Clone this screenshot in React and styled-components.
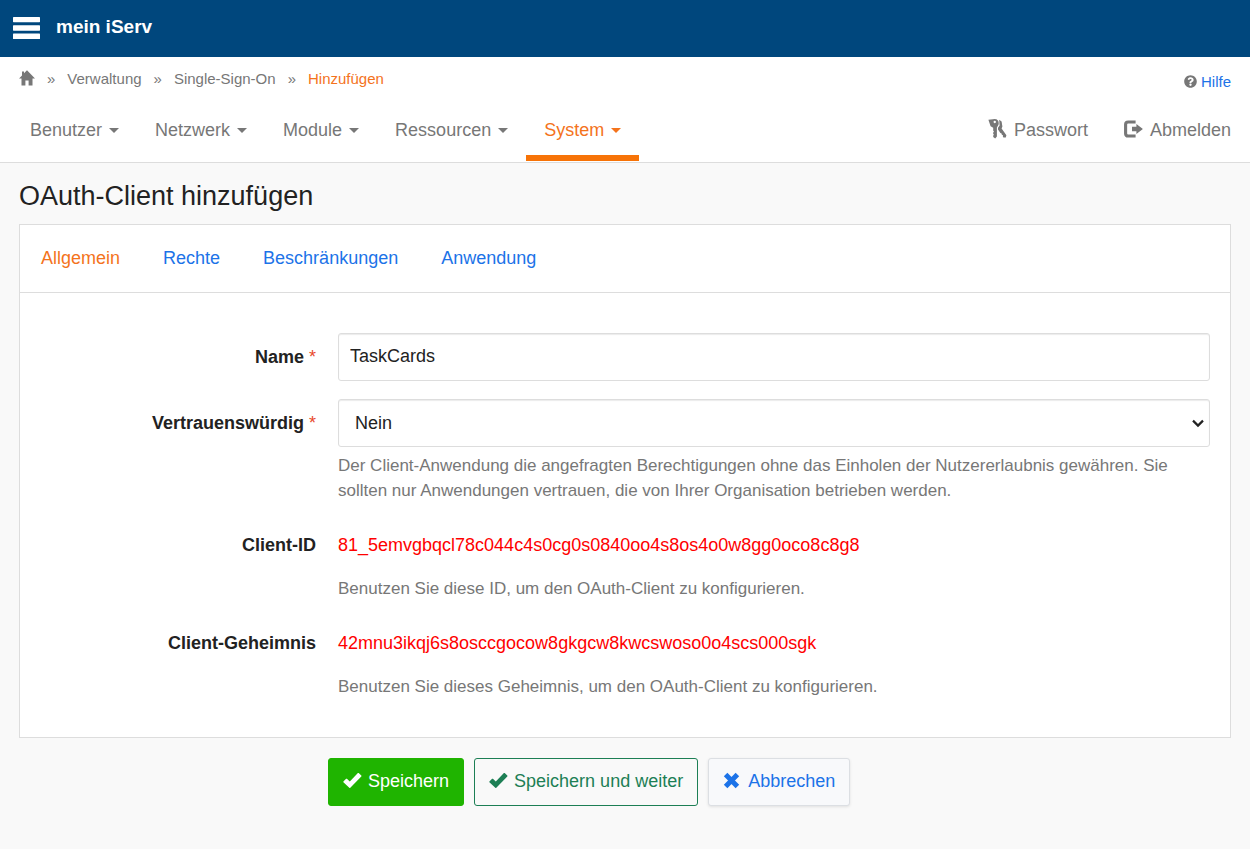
import React from 'react';
import { styled, createGlobalStyle } from 'styled-components';
import { FaQuestionCircle } from 'react-icons/fa';

const help_trusted = `Der Client-Anwendung die angefragten Berechtigungen ohne das Einholen der Nutzererlaubnis gewähren. Sie sollten nur Anwendungen vertrauen, die von Ihrer Organisation betrieben werden.`;
const help_id = `Benutzen Sie diese ID, um den OAuth-Client zu konfigurieren.`;
const help_secret = `Benutzen Sie dieses Geheimnis, um den OAuth-Client zu konfigurieren.`;

const menu = ['Benutzer', 'Netzwerk', 'Module', 'Ressourcen', 'System'];
const tabs = ['Allgemein', 'Rechte', 'Beschränkungen', 'Anwendung'];

const GlobalStyle = createGlobalStyle`
  * {
    box-sizing: border-box;
  }
  body {
    margin: 0;
    background: #f9f9f9;
    color: #222;
    font-family: 'Liberation Sans', Arial, sans-serif;
    font-size: 18px;
    line-height: 25px;
  }
  a {
    color: inherit;
    text-decoration: none;
  }
  input, select, button {
    color: inherit;
    font: inherit;
  }
  svg {
    display: block;
    flex: none;
  }
`;

/* top bar */
const TopBar = styled.header`
  display: flex;
  align-items: center;
  gap: 16px;
  height: 57px;
  padding: 0 13px 2px;
  background: #00477d;
  color: #fff;
`;
const MenuButton = styled.button`
  padding: 0;
  border: 0;
  background: none;
  cursor: pointer;
`;
const Brand = styled.a`
  padding-bottom: 2px;
  font-size: 19px;
  font-weight: bold;
`;

/* breadcrumb and main navigation */
const NavArea = styled.div`
  border-bottom: 1px solid #ddd;
  background: #fff;
  color: #777;
`;
const CrumbRow = styled.div`
  display: flex;
  justify-content: space-between;
  padding: 9px 19px 8px;
  font-size: 15px;
`;
const Crumbs = styled.ol`
  display: flex;
  align-items: center;
  margin: 0;
  padding: 0;
  list-style: none;
`;
const Crumb = styled.li`
  display: flex;
  align-items: center;
  color: ${({ $active }) => ($active ? '#f4731c' : 'inherit')};

  &:not(:first-child)::before {
    content: '»';
    padding: 0 12px;
    color: #777;
  }
`;
const Help = styled.a`
  display: flex;
  align-items: center;
  gap: 4px;
  padding-top: 6px;
  line-height: 19px;

  span {
    color: #1c73e8;
  }
`;
const Nav = styled.nav`
  display: flex;
  justify-content: space-between;
  padding: 0 1px 1px 12px;
`;
const NavGroup = styled.div`
  display: flex;
`;
const NavLink = styled.a`
  display: flex;
  align-items: center;
  gap: 7px;
  height: 62px;
  padding: 6px 18px 0;
  border-bottom: 6px solid ${({ $active }) => ($active ? '#f77307' : 'transparent')};
  color: ${({ $active }) => ($active ? '#f4731c' : '#777')};
`;
const Caret = styled.span`
  border-top: 5px solid currentColor;
  border-left: 5px solid transparent;
  border-right: 5px solid transparent;
`;

/* page content */
const Main = styled.main`
  padding: 16px 19px 43px;
`;
const Title = styled.h1`
  margin: 0 0 10px;
  font-size: 27px;
  font-weight: normal;
  line-height: 35px;
`;
const Panel = styled.section`
  border: 1px solid #ddd;
  background: #fff;
`;
const Tabs = styled.nav`
  display: flex;
  gap: 43px;
  padding: 21px;
  border-bottom: 1px solid #ddd;
`;
const Tab = styled.a`
  color: ${({ $active }) => ($active ? '#f4731c' : '#1c73e8')};
`;
const Fields = styled.div`
  display: grid;
  gap: 18px;
  padding: 40px 20px 38px;
`;
const Row = styled.div`
  display: grid;
  grid-template-columns: repeat(4, minmax(0, 1fr));
  column-gap: 22px;
`;
const Label = styled.label`
  padding-top: 12px;
  font-weight: bold;
  text-align: right;
`;
const Required = styled.span`
  color: #e8492c;
  font-weight: normal;
`;
const Field = styled.div`
  grid-column: span 3;
`;
const Input = styled.input`
  display: block;
  width: 100%;
  height: 48px;
  padding: 0 11px 2px;
  border: 1px solid #ddd;
  border-radius: 3px;
  background: #fff;
  box-shadow: inset 0 1px 1px rgba(0, 0, 0, 0.08);
`;
const SelectBox = styled.div`
  position: relative;

  svg {
    position: absolute;
    top: 20px;
    right: 6px;
    pointer-events: none;
  }
`;
const Select = styled(Input).attrs({ as: 'select' })`
  padding: 0 28px 0 16px;
  appearance: none;
`;
const Value = styled.output`
  display: block;
  padding: 12px 0;
  color: #f00;
`;
const HelpText = styled.p`
  margin: 6px 0 0;
  color: #777;
  font-size: 17px;
`;

const Actions = styled.div`
  display: flex;
  flex-wrap: wrap;
  gap: 10px;
  padding: 20px 12px 0 calc(25% + 6px);
`;
const Button = styled.button`
  display: flex;
  align-items: center;
  gap: ${({ $gap }) => $gap || 6}px;
  height: 48px;
  padding: 0 14px 2px;
  border: 1px solid ${({ $border }) => $border};
  border-radius: 3px;
  background: ${({ $bg }) => $bg};
  color: ${({ $color }) => $color};
  box-shadow: ${({ $raised }) => ($raised ? '0 1px 3px rgba(0, 0, 0, 0.1)' : 'none')};
  cursor: pointer;
`;

const BarsIcon = () => (
  <svg width="27" height="22" viewBox="0 0 27 22" fill="currentColor" aria-hidden="true">
    <rect width="27" height="5.2" rx="0.6" />
    <rect y="8.3" width="27" height="5.4" rx="0.6" />
    <rect y="16.6" width="27" height="5.4" rx="0.6" />
  </svg>
);
const HomeIcon = () => (
  <svg width="16" height="18" viewBox="0 0 16 18" fill="currentColor" aria-hidden="true">
    <path d="M8 0.2 L16 8.4 H13.5 V15.4 H9.6 V10.4 H6.4 V15.4 H2.5 V8.4 H0 L3 5.4 V1.6 H5 V3.3 Z" />
  </svg>
);
const KeysIcon = () => (
  <svg width="19" height="22" viewBox="0 0 19 22" fill="currentColor" aria-hidden="true">
    <path
      fillRule="evenodd"
      d="M0.4 0.8 L5 0.3 Q8 -0.4 10 1.6 Q11.2 3.6 10.4 6 L8.9 8.6 V17.6 L7.2 19.6 L5.2 18 V16.6 L6 15.8 L5.2 15 V13.4 L6 12.6 L5.2 11.8 V8.8 L2.6 7.2 Z M6.7 1.8 A1.2 1.2 0 1 0 6.8 4.2 A1.2 1.2 0 1 0 6.7 1.8 Z"
    />
    <path d="M11.2 0.8 L13.6 2.6 L14.4 7.6 L13.6 9.6 L18.4 16.2 L17.8 18.6 L15.4 18.4 L14.8 17.2 L15 16.2 L13.8 15.8 L13.6 14.4 L12.4 14 L10 10.4 V8.8 L11.6 6.4 Z" />
  </svg>
);
const LogoutIcon = () => (
  <svg width="19" height="20" viewBox="0 0 19 20" aria-hidden="true">
    <path
      d="M11.6 2 H4.2 Q1.6 2 1.6 4.6 V13.4 Q1.6 16 4.2 16 H11.6"
      fill="none"
      stroke="currentColor"
      strokeWidth="3.1"
    />
    <path d="M8 6.7 H12.4 V3.9 L18.9 9 L12.4 14.1 V11.3 H8 Z" fill="currentColor" />
  </svg>
);
const ChevronIcon = () => (
  <svg width="12" height="9" viewBox="0 0 12 9" aria-hidden="true">
    <path d="M1 1.6 L6 6.6 L11 1.6" fill="none" stroke="#222" strokeWidth="2.2" />
  </svg>
);
const OkIcon = () => (
  <svg width="19" height="18" viewBox="0 0 19 18" fill="currentColor" aria-hidden="true">
    <path d="M0.4 9.5 L3.1 6.8 Q3.5 6.5 3.9 6.8 L6.8 9.5 L14.9 1.1 Q15.3 0.7 15.7 1.1 L18.3 3.6 Q18.7 4 18.3 4.4 L7.3 15.7 Q6.8 16.2 6.3 15.7 L0.4 10.3 Q0.1 9.9 0.4 9.5 Z" />
  </svg>
);
const RemoveIcon = () => (
  <svg width="17" height="18" viewBox="0 0 17 18" aria-hidden="true">
    <path d="M2.6 2.6 L14.4 14.4 M14.4 2.6 L2.6 14.4" fill="none" stroke="currentColor" strokeWidth="5" />
  </svg>
);

const App = () => {
  return (
    <>
      <GlobalStyle />
      <TopBar>
        <MenuButton type="button" aria-label="Menü">
          <BarsIcon />
        </MenuButton>
        <Brand href="#">mein iServ</Brand>
      </TopBar>
      <NavArea>
        <CrumbRow>
          <Crumbs>
            <Crumb>
              <a href="#" aria-label="Start">
                <HomeIcon />
              </a>
            </Crumb>
            <Crumb>
              <a href="#">Verwaltung</a>
            </Crumb>
            <Crumb>
              <a href="#">Single-Sign-On</a>
            </Crumb>
            <Crumb $active>Hinzufügen</Crumb>
          </Crumbs>
          <Help href="#">
            <FaQuestionCircle size={13} />
            <span>Hilfe</span>
          </Help>
        </CrumbRow>
        <Nav>
          <NavGroup>
            {menu.map((item) => (
              <NavLink key={item} href="#" $active={item === 'System'}>
                {item}
                <Caret />
              </NavLink>
            ))}
          </NavGroup>
          <NavGroup>
            <NavLink href="#">
              <KeysIcon />
              Passwort
            </NavLink>
            <NavLink href="#">
              <LogoutIcon />
              Abmelden
            </NavLink>
          </NavGroup>
        </Nav>
      </NavArea>
      <Main>
        <Title>OAuth-Client hinzufügen</Title>
        <form onSubmit={(e) => e.preventDefault()}>
          <Panel>
            <Tabs>
              {tabs.map((item) => (
                <Tab key={item} href="#" $active={item === 'Allgemein'}>
                  {item}
                </Tab>
              ))}
            </Tabs>
            <Fields>
              <Row>
                <Label htmlFor="name">
                  Name <Required>*</Required>
                </Label>
                <Field>
                  <Input id="name" type="text" defaultValue="TaskCards" />
                </Field>
              </Row>
              <Row>
                <Label htmlFor="trusted">
                  Vertrauenswürdig <Required>*</Required>
                </Label>
                <Field>
                  <SelectBox>
                    <Select id="trusted" defaultValue="Nein">
                      <option>Nein</option>
                      <option>Ja</option>
                    </Select>
                    <ChevronIcon />
                  </SelectBox>
                  <HelpText>{help_trusted}</HelpText>
                </Field>
              </Row>
              <Row>
                <Label htmlFor="client-id">Client-ID</Label>
                <Field>
                  <Value id="client-id">81_5emvgbqcl78c044c4s0cg0s0840oo4s8os4o0w8gg0oco8c8g8</Value>
                  <HelpText>{help_id}</HelpText>
                </Field>
              </Row>
              <Row>
                <Label htmlFor="client-secret">Client-Geheimnis</Label>
                <Field>
                  <Value id="client-secret">42mnu3ikqj6s8osccgocow8gkgcw8kwcswoso0o4scs000sgk</Value>
                  <HelpText>{help_secret}</HelpText>
                </Field>
              </Row>
            </Fields>
          </Panel>
          <Actions>
            <Button type="submit" $bg="#1fb400" $border="#1fb400" $color="#fff">
              <OkIcon />
              Speichern
            </Button>
            <Button type="submit" $bg="transparent" $border="#1d7f55" $color="#1d7f55">
              <OkIcon />
              Speichern und weiter
            </Button>
            <Button type="button" $bg="#f8f9fb" $border="#dcdfe3" $color="#1c73e8" $gap={8} $raised>
              <RemoveIcon />
              Abbrechen
            </Button>
          </Actions>
        </form>
      </Main>
    </>
  );
};

export default App;
